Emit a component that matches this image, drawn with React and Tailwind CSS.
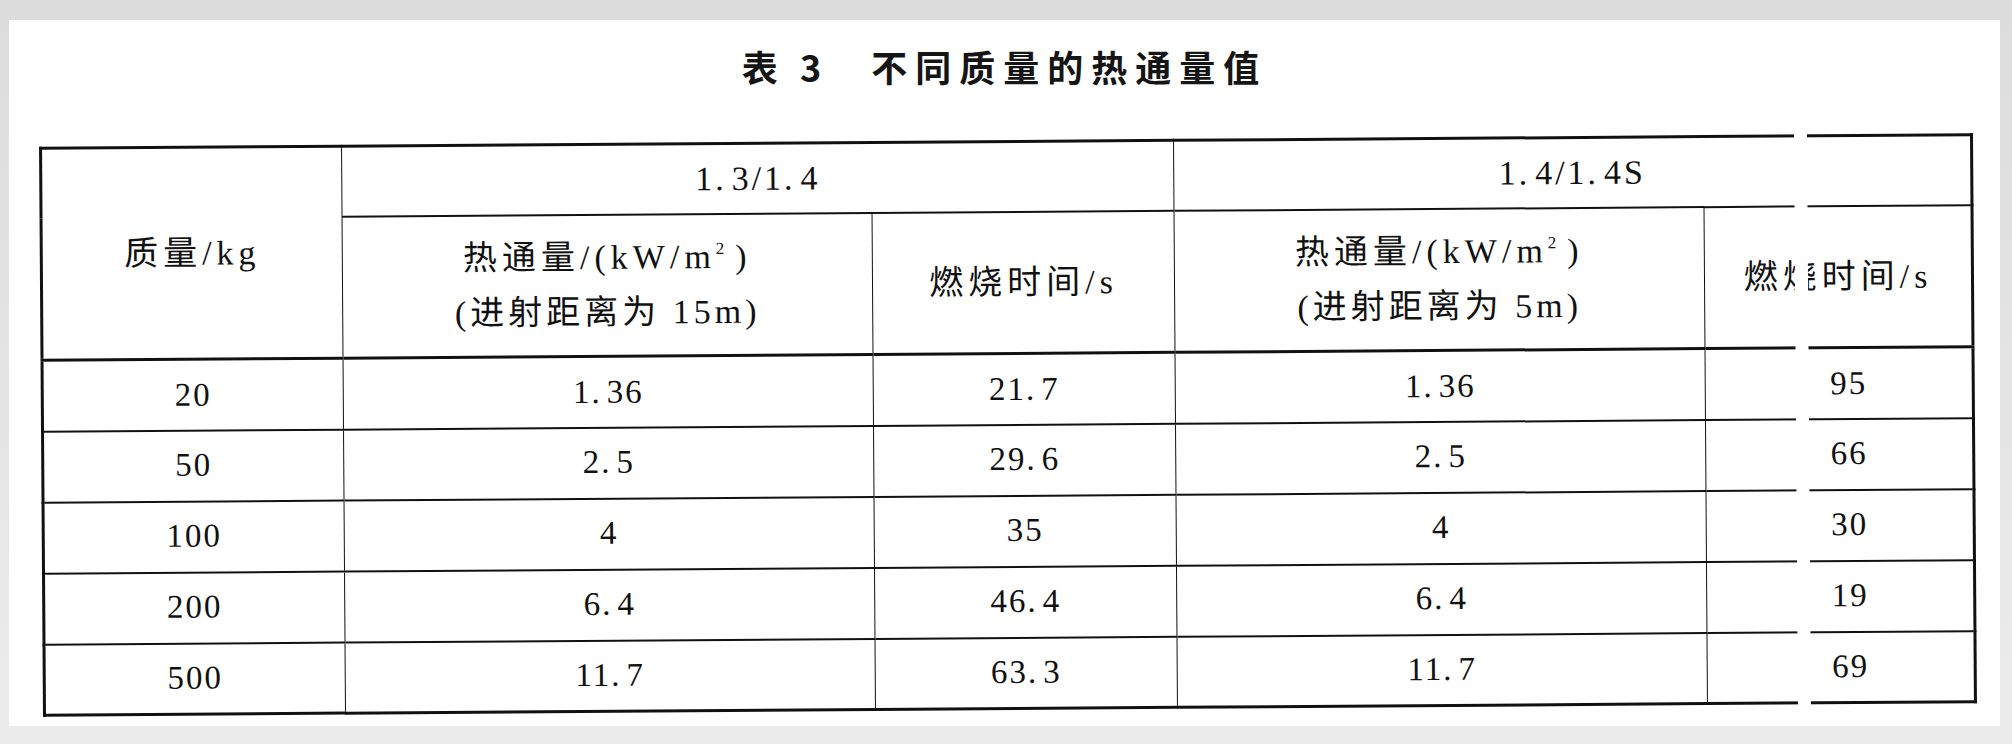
import React from "react";

const rows = [
  ["20", "1.36", "21.7", "1.36", "95"],
  ["50", "2.5", "29.6", "2.5", "66"],
  ["100", "4", "35", "4", "30"],
  ["200", "6.4", "46.4", "6.4", "19"],
  ["500", "11.7", "63.3", "11.7", "69"],
];

// decimal point printed with a wide gap after it, as in the scanned standard
const Num = ({ v }) => {
  const [a, b] = v.split(".");
  if (b === undefined) return <>{a}</>;
  return (
    <>
      {a}
      <span className="mr-[5px]">.</span>
      {b}
    </>
  );
};

const Flux = ({ dist }) => (
  <div className="leading-[55px]">
    <div>
      热通量/(kW/m<sup className="text-[17px] relative -top-[2px] align-super leading-none">2</sup>
      <span className="ml-[6px]">)</span>
    </div>
    <div className="tracking-[4px]">(进射距离为 {dist})</div>
  </div>
);

export default function App() {
  return (
    <div className="w-[2012px] h-[744px] bg-gradient-to-b from-[#dcdcdc] to-[#ececec] pt-[20px] pl-[9px] pr-[12px] pb-[18px] overflow-hidden">
      <div className="bg-white h-full flex flex-col items-start">
        <h1 className="self-stretch text-center mt-[28px] text-[36px] leading-none font-bold text-[#151515] font-['Noto_Sans_CJK_SC','Noto_Sans',sans-serif]">
          <span>表</span>
          <span className="ml-[22px]">3</span>
          <span className="ml-[50px] tracking-[8px]">不同质量的热通量值</span>
        </h1>

        <div className="relative ml-[32px] mt-[56px] w-[1931px] -rotate-[0.4deg]">
          <table className="w-full table-fixed border-collapse border-[3px] border-[#111] text-[#111] text-[34px] tracking-[5px] font-['Liberation_Serif','Noto_Sans_CJK_SC',serif]">
            <colgroup>
              <col className="w-[301px]" />
              <col className="w-[530px]" />
              <col className="w-[302px]" />
              <col className="w-[530px]" />
              <col className="w-[268px]" />
            </colgroup>
            <thead>
              <tr className="h-[70px]">
                <th rowSpan={2} className="font-normal border-r-[1.5px] border-b-[3px] border-[#111]">
                  质量/kg
                </th>
                <th colSpan={2} className="font-normal text-[34px] tracking-[3px] border-r-[1.5px] border-b-[2px] border-[#111]">
                  <Num v="1.3" />/<Num v="1.4" />
                </th>
                <th colSpan={2} className="font-normal text-[34px] tracking-[3px] border-b-[2px] border-[#111]">
                  <Num v="1.4" />/<Num v="1.4S" />
                </th>
              </tr>
              <tr className="h-[142px]">
                <th className="font-normal border-r-[1.5px] border-b-[3px] border-[#111]">
                  <Flux dist="15m" />
                </th>
                <th className="font-normal border-r-[1.5px] border-b-[3px] border-[#111]">燃烧时间/s</th>
                <th className="font-normal border-r-[1.5px] border-b-[3px] border-[#111]">
                  <Flux dist="5m" />
                </th>
                <th className="font-normal border-b-[3px] border-[#111]">燃烧时间/s</th>
              </tr>
            </thead>
            <tbody className="text-[33px] tracking-[2px]">
              {rows.map((r, i) => (
                <tr key={r[0]} className="h-[71px]">
                  {r.map((v, j) => (
                    <td
                      key={j}
                      className={`text-center border-[#111] ${j < 4 ? "border-r-[1.5px]" : "pl-[20px]"} ${
                        i < rows.length - 1 ? "border-b-[2px]" : ""
                      }`}
                    >
                      <Num v={v} />
                    </td>
                  ))}
                </tr>
              ))}
            </tbody>
          </table>
          {/* white streak left by the scanner across the last column */}
          <div className="absolute left-[1755px] -top-[8px] -bottom-[8px] w-[13px] bg-white" />
        </div>
      </div>
    </div>
  );
}
